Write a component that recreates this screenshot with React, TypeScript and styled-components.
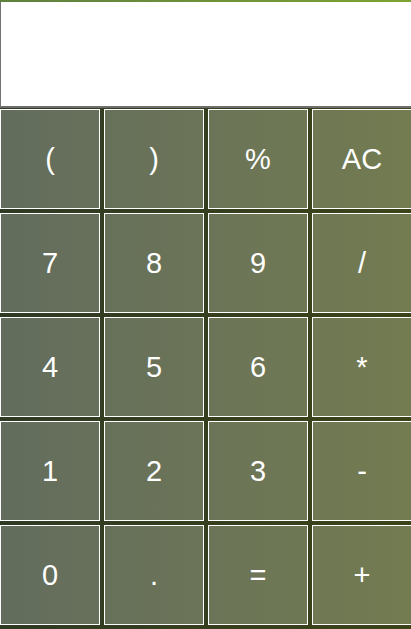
import styled, { createGlobalStyle } from 'styled-components';

const GlobalStyle = createGlobalStyle`
  html, body {
    margin: 0;
    padding: 0;
    overflow: hidden;
    background: #313b20;
  }
`;

const Calculator = styled.div`
  width: 411px;
  height: 629px;
  overflow: hidden;
  display: flex;
  flex-direction: column;
  background: linear-gradient(to right, #2f3a24, #3b4418);
  font-family: 'Liberation Sans', Arial, sans-serif;
`;

const Accent = styled.div`
  height: 2px;
  flex-shrink: 0;
  background: linear-gradient(to right, #5f7f3f, #7da332);
`;

const Display = styled.div`
  height: 104px;
  width: 430px;
  flex-shrink: 0;
  background: #ffffff;
  border-left: 1px solid #737373;
  border-bottom: 2px solid #6e6e6e;
  box-sizing: content-box;
`;

const Keypad = styled.div`
  display: grid;
  grid-template-columns: repeat(4, 100px);
  grid-auto-rows: 100px;
  gap: 4px;
  padding-top: 1px;
`;

const Key = styled.button`
  box-sizing: border-box;
  width: 100px;
  height: 100px;
  margin: 0;
  padding: 0;
  border: 1px solid #ffffff;
  border-radius: 0;
  background: linear-gradient(to right, #636d5d, #737b51);
  background-attachment: fixed;
  color: #ffffff;
  font-family: 'Liberation Sans', Arial, sans-serif;
  font-size: 29px;
  display: flex;
  align-items: center;
  justify-content: center;
  cursor: pointer;
`;

const keys = [
  '(', ')', '%', 'AC',
  '7', '8', '9', '/',
  '4', '5', '6', '*',
  '1', '2', '3', '-',
  '0', '.', '=', '+',
];

function App() {
  return (
    <>
      <GlobalStyle />
      <Calculator>
        <Accent />
        <Display />
        <Keypad>
          {keys.map((k) => (
            <Key key={k}>{k}</Key>
          ))}
        </Keypad>
      </Calculator>
    </>
  );
}

export default App;
